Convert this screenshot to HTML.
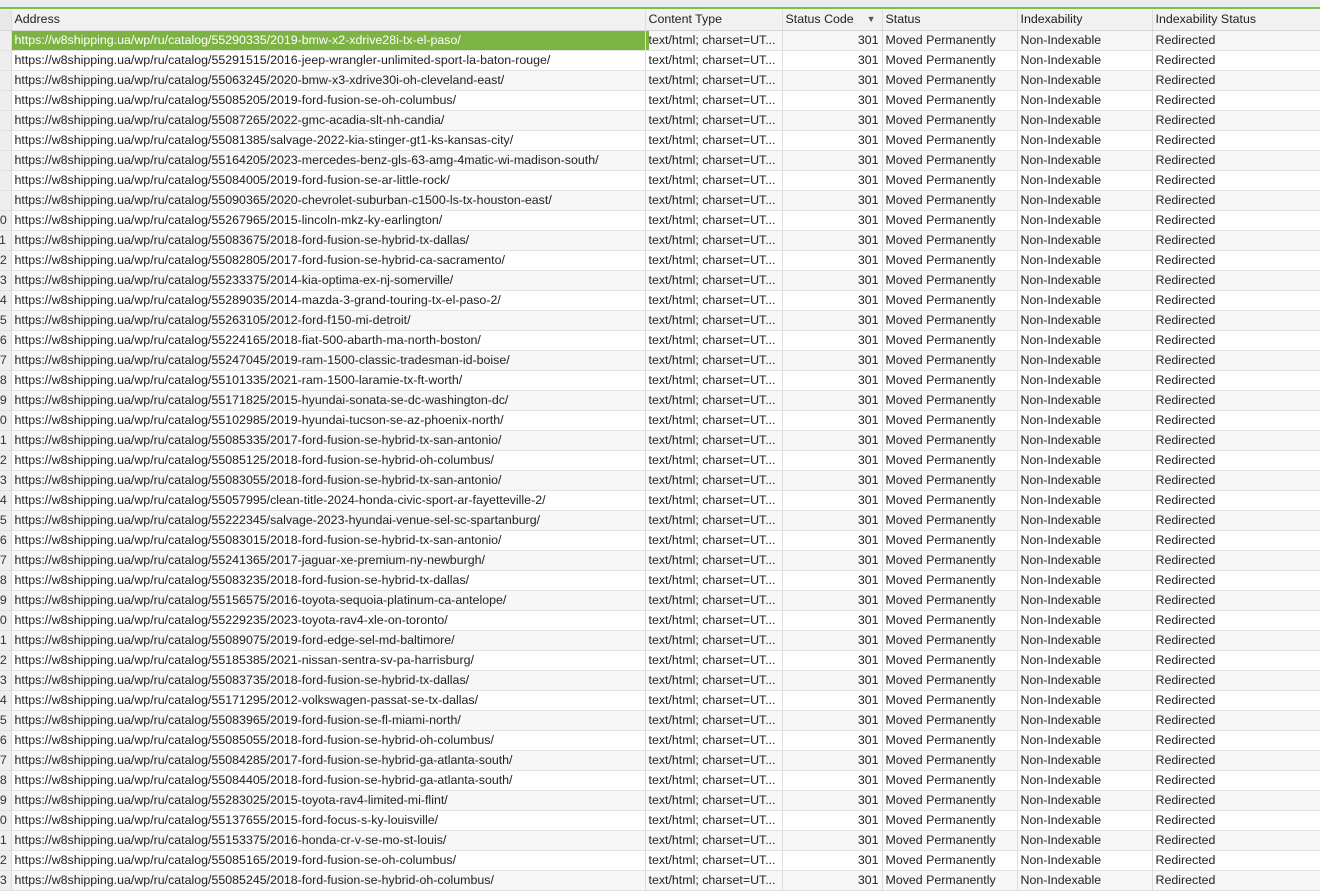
<!DOCTYPE html>
<html><head><meta charset="utf-8"><style>
*{margin:0;padding:0;box-sizing:border-box}
body{width:1320px;height:877px;overflow:hidden;background:#fff;font-family:"Liberation Sans",sans-serif;font-size:12.4px;color:#222;position:relative}
.top{position:absolute;left:0;top:0;width:1320px;height:8px;background:#ececec}
.gl{position:absolute;left:0;top:7px;width:1320px;height:2px;background:#7cc242}
.hb{position:absolute;left:0;top:9px;width:1320px;height:1px;background:#f1f1f1}
table{position:absolute;left:0;top:10px;border-collapse:collapse;table-layout:fixed;width:1320px}
td,th{height:20px;border-right:1px solid #dcdcdc;border-bottom:1px solid #e2e2e2;white-space:nowrap;overflow:hidden;padding:0 3px;font-weight:normal;text-align:left;line-height:19px}
th{background:#f1f1f1;color:#222;height:20px;border-bottom:1px solid #d5d5d5}
tr:nth-child(odd) td{background:#f7f7f7}
td.i{background:#eeeeee!important;padding:0;color:#333;text-overflow:clip;text-indent:-7px}
td.n{text-align:right;padding-right:3px}
td.sel{background:#7cb342!important;color:#fff}
td.mk{box-shadow:inset 3px 0 0 #7cb342}
.arr{float:right;font-size:9px;color:#555;margin-right:3px}
</style></head><body>
<div class="top"></div><div class="gl"></div><div class="hb"></div>
<table>
<colgroup><col style="width:11px"><col style="width:634px"><col style="width:137px"><col style="width:100px"><col style="width:135px"><col style="width:135px"><col style="width:168px"></colgroup>
<tr><th style="background:#e8e8e8"></th><th>Address</th><th>Content Type</th><th>Status Code <span class="arr">▼</span></th><th>Status</th><th>Indexability</th><th>Indexability Status</th></tr>
<tbody id="b"></tbody>
</table>
<script>
var u=["55290335/2019-bmw-x2-xdrive28i-tx-el-paso/","55291515/2016-jeep-wrangler-unlimited-sport-la-baton-rouge/","55063245/2020-bmw-x3-xdrive30i-oh-cleveland-east/","55085205/2019-ford-fusion-se-oh-columbus/","55087265/2022-gmc-acadia-slt-nh-candia/","55081385/salvage-2022-kia-stinger-gt1-ks-kansas-city/","55164205/2023-mercedes-benz-gls-63-amg-4matic-wi-madison-south/","55084005/2019-ford-fusion-se-ar-little-rock/","55090365/2020-chevrolet-suburban-c1500-ls-tx-houston-east/","55267965/2015-lincoln-mkz-ky-earlington/","55083675/2018-ford-fusion-se-hybrid-tx-dallas/","55082805/2017-ford-fusion-se-hybrid-ca-sacramento/","55233375/2014-kia-optima-ex-nj-somerville/","55289035/2014-mazda-3-grand-touring-tx-el-paso-2/","55263105/2012-ford-f150-mi-detroit/","55224165/2018-fiat-500-abarth-ma-north-boston/","55247045/2019-ram-1500-classic-tradesman-id-boise/","55101335/2021-ram-1500-laramie-tx-ft-worth/","55171825/2015-hyundai-sonata-se-dc-washington-dc/","55102985/2019-hyundai-tucson-se-az-phoenix-north/","55085335/2017-ford-fusion-se-hybrid-tx-san-antonio/","55085125/2018-ford-fusion-se-hybrid-oh-columbus/","55083055/2018-ford-fusion-se-hybrid-tx-san-antonio/","55057995/clean-title-2024-honda-civic-sport-ar-fayetteville-2/","55222345/salvage-2023-hyundai-venue-sel-sc-spartanburg/","55083015/2018-ford-fusion-se-hybrid-tx-san-antonio/","55241365/2017-jaguar-xe-premium-ny-newburgh/","55083235/2018-ford-fusion-se-hybrid-tx-dallas/","55156575/2016-toyota-sequoia-platinum-ca-antelope/","55229235/2023-toyota-rav4-xle-on-toronto/","55089075/2019-ford-edge-sel-md-baltimore/","55185385/2021-nissan-sentra-sv-pa-harrisburg/","55083735/2018-ford-fusion-se-hybrid-tx-dallas/","55171295/2012-volkswagen-passat-se-tx-dallas/","55083965/2019-ford-fusion-se-fl-miami-north/","55085055/2018-ford-fusion-se-hybrid-oh-columbus/","55084285/2017-ford-fusion-se-hybrid-ga-atlanta-south/","55084405/2018-ford-fusion-se-hybrid-ga-atlanta-south/","55283025/2015-toyota-rav4-limited-mi-flint/","55137655/2015-ford-focus-s-ky-louisville/","55153375/2016-honda-cr-v-se-mo-st-louis/","55085165/2019-ford-fusion-se-oh-columbus/","55085245/2018-ford-fusion-se-hybrid-oh-columbus/"];
var h="";for(var i=0;i<u.length;i++){h+='<tr><td class="i">'+(i+1>9?(i+1):'')+'</td><td'+(i==0?' class="sel"':'')+'>https://w8shipping.ua/wp/ru/catalog/'+u[i]+'</td><td'+(i==0?' class="mk"':'')+'>text/html; charset=UT...</td><td class="n">301</td><td>Moved Permanently</td><td>Non-Indexable</td><td>Redirected</td></tr>';}
document.getElementById("b").innerHTML=h;
</script>
</body></html>
